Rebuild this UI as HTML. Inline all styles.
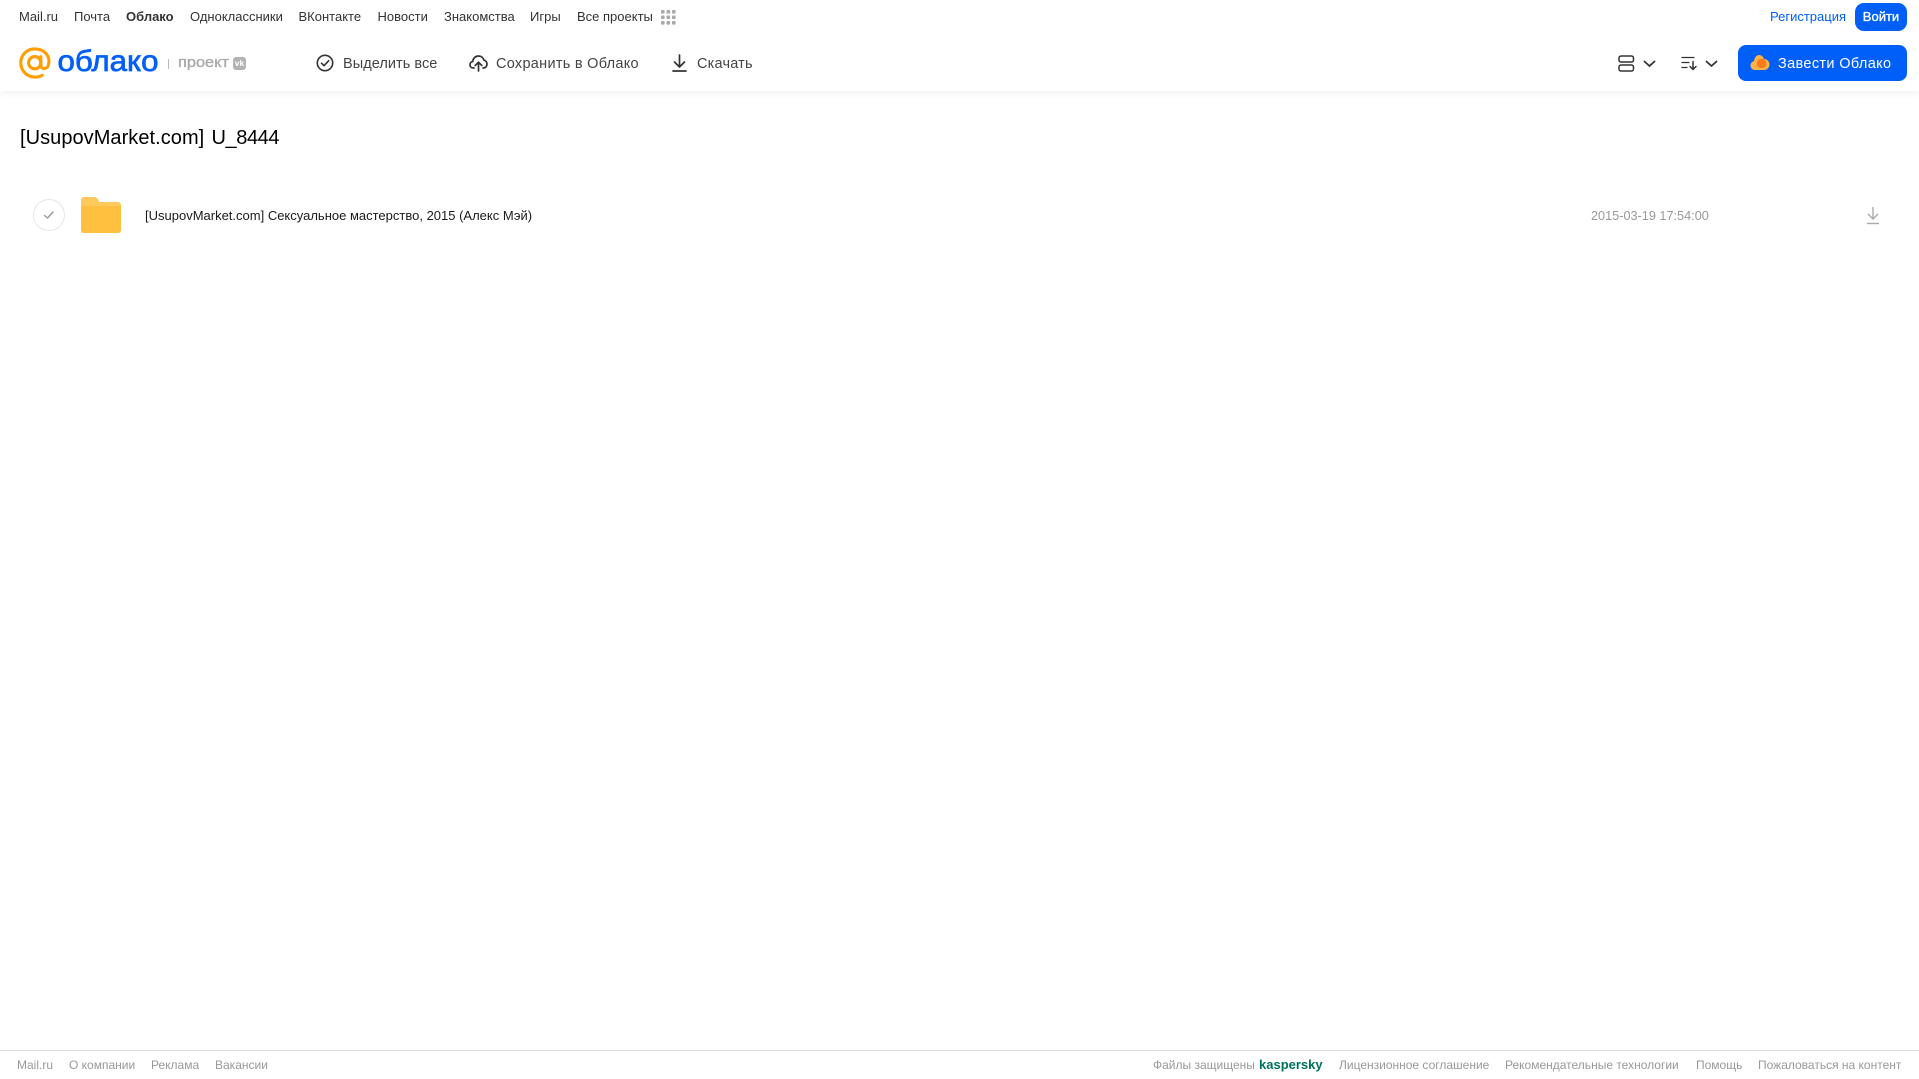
<!DOCTYPE html>
<html lang="ru"><head><meta charset="utf-8"><title>Облако</title>
<style>
html,body{margin:0;padding:0;background:#fff}
body{width:1919px;height:1079px;position:relative;overflow:hidden;font-family:"Liberation Sans",sans-serif}
.t{position:absolute;white-space:nowrap;line-height:20px}
.n{font-size:13px;color:#333;top:6.5px}
.a{font-size:14.5px;color:#444;top:53.5px}
.f{font-size:12px;color:#999;top:1055px}
svg{position:absolute;overflow:visible}
</style></head><body>
<div style="position:absolute;left:0;top:0;width:1919px;height:91px;background:#fff;box-shadow:0 1px 8px rgba(0,0,0,.08)"></div>

<a class="t n" style="left:19px">Mail.ru</a>
<a class="t n" style="left:74px">Почта</a>
<a class="t n" style="left:126px;font-weight:bold">Облако</a>
<a class="t n" style="left:190px">Одноклассники</a>
<a class="t n" style="left:298.5px">ВКонтакте</a>
<a class="t n" style="left:377.5px">Новости</a>
<a class="t n" style="left:444px">Знакомства</a>
<a class="t n" style="left:530px">Игры</a>
<a class="t n" style="left:577px">Все проекты</a>
<svg style="left:661px;top:10px" width="15" height="15"><g fill="#aaa"><rect width="3.6" height="3.6" rx=".8"/><rect x="5.5" width="3.6" height="3.6" rx=".8"/><rect x="11" width="3.6" height="3.6" rx=".8"/><rect y="5.5" width="3.6" height="3.6" rx=".8"/><rect x="5.5" y="5.5" width="3.6" height="3.6" rx=".8"/><rect x="11" y="5.5" width="3.6" height="3.6" rx=".8"/><rect y="11" width="3.6" height="3.6" rx=".8"/><rect x="5.5" y="11" width="3.6" height="3.6" rx=".8"/><rect x="11" y="11" width="3.6" height="3.6" rx=".8"/></g></svg>

<a class="t" style="left:1770px;top:6.5px;font-size:13px;color:#005ff9">Регистрация</a>
<div class="t" style="left:1855px;top:3px;width:52px;height:28px;line-height:27px;border-radius:9px;background:#005ff9;color:#fff;font-size:13px;text-align:center;-webkit-text-stroke:.35px #fff">Войти</div>

<!-- logo -->
<svg style="left:19px;top:47px" width="32" height="32" viewBox="0 0 33 33"><circle cx="16.2" cy="16.2" r="6.3" fill="none" stroke="#ff9e00" stroke-width="3.2"/><path d="M22.5 10v8.500c0 5 6.800 5 8-.5 2-8.500-4-16-14.300-16C7.800 2 1.800 8.500 1.800 16.300c0 8.500 6.700 14.700 14.700 14.700 3 0 5.300-.6 7.500-1.800" fill="none" stroke="#ff9e00" stroke-width="3.200" stroke-linecap="round"/></svg>
<svg style="left:56px;top:44px" width="108" height="36"><text x="1.500" y="27" font-family="Liberation Sans" font-size="30" fill="#005ff9" stroke="#005ff9" stroke-width=".7" textLength="101" lengthAdjust="spacingAndGlyphs">облако</text></svg>
<div style="position:absolute;left:168px;top:59px;width:1px;height:10px;background:#bbb"></div>
<svg style="left:177px;top:50px" width="56" height="24"><text x="1" y="17" font-family="Liberation Sans" font-size="15" fill="#a9a9a9" stroke="#a9a9a9" stroke-width=".35" textLength="51" lengthAdjust="spacingAndGlyphs">проект</text></svg>
<div style="position:absolute;left:233px;top:56.500px;width:13px;height:13px;border-radius:3px;background:#b3b3b3;color:#fff;font-size:8.500px;font-weight:bold;line-height:12px;text-align:center">vk</div>

<!-- toolbar -->
<svg style="left:316px;top:54px" width="18" height="18" fill="none" stroke="#333" stroke-width="1.600" stroke-linecap="round" stroke-linejoin="round"><circle cx="9" cy="9" r="7.700"/><path d="M5.500 9.200l2.500 2.500 4.700-5"/></svg>
<div class="t a" style="left:343px;letter-spacing:.05px">Выделить все</div>
<svg style="left:469px;top:54px" width="19" height="18" fill="none" stroke="#333" stroke-width="1.700" stroke-linecap="round" stroke-linejoin="round"><path d="M5 14H4.300C2.300 14 1 12.500 1 10.700 1 9 2.200 7.700 3.800 7.500 4 4.200 6.500 2 9.500 2c2.700 0 4.800 1.800 5.400 4.200 1.800.3 3.100 1.900 3.100 3.900 0 2.200-1.600 3.900-3.700 3.900H14"/><path d="M9.500 17V8.500M6.200 11.500l3.300-3.300 3.300 3.300"/></svg>
<div class="t a" style="left:496px;letter-spacing:.28px">Сохранить в Облако</div>
<svg style="left:671.500px;top:54px" width="15" height="18" fill="none" stroke="#333" stroke-width="1.700" stroke-linecap="round" stroke-linejoin="round"><path d="M7.500 1v11.500M2.500 8l5 5 5-5"/><path d="M1 17h13"/></svg>
<div class="t a" style="left:697px;letter-spacing:.2px">Скачать</div>

<svg style="left:1618px;top:55px" width="17" height="17" fill="none" stroke="#333" stroke-width="1.500"><rect x="1" y="1" width="14.500" height="6" rx="2"/><rect x="1" y="10" width="14.500" height="6" rx="2"/></svg>
<svg style="left:1643px;top:60px" width="13" height="8" fill="none" stroke="#333" stroke-width="1.800" stroke-linecap="round" stroke-linejoin="round"><path d="M1.500 1.500L6.500 6l5-4.500"/></svg>
<svg style="left:1681px;top:56px" width="17" height="15" fill="none" stroke="#333" stroke-width="1.300" stroke-linecap="round" stroke-linejoin="round"><path d="M1 1.500h12M1 6.500h7M1 11.500h5"/><path d="M12 5.500V13M9 10.500l3 3 3-3" stroke-width="1.500"/></svg>
<svg style="left:1705px;top:60px" width="13" height="8" fill="none" stroke="#333" stroke-width="1.800" stroke-linecap="round" stroke-linejoin="round"><path d="M1.500 1.500L6.500 6l5-4.500"/></svg>

<div style="position:absolute;left:1738px;top:45px;width:169px;height:36px;border-radius:8px;background:#005ff9"></div>
<svg style="left:1750px;top:54px" width="20" height="17"><path d="M5 16C2.300 16 .5 14 .5 11.500c0-2.300 1.500-4 3.500-4.300C4.500 3.500 6.500 1 9 1c2.400 0 4.300 1.600 4.900 4 3 0 5.600 2.400 5.600 5.500S17 16 14 16z" fill="#ffb347"/><circle cx="11.500" cy="9.500" r="4.800" fill="#ff7a1a"/></svg>
<div class="t" style="left:1778px;top:53.500px;font-size:14.500px;color:#fff;letter-spacing:.35px">Завести Облако</div>

<!-- content -->
<div class="t" style="left:20px;top:126px;font-size:20px;line-height:24px;color:#000"><span style="letter-spacing:.05px">[UsupovMarket.com]</span><span style="margin-left:1.600px"> </span><span style="letter-spacing:-.4px">U_8444</span></div>

<div style="position:absolute;left:33px;top:199px;width:30px;height:30px;border:1px solid #e6e6e6;border-radius:50%"></div>
<svg style="left:43px;top:210px" width="12" height="10" fill="none" stroke="#999" stroke-width="1.400" stroke-linecap="round" stroke-linejoin="round"><path d="M1.500 5.500l3 2.500 5.500-6"/></svg>
<svg style="left:81px;top:197px" width="40" height="36"><path d="M0 3a3 3 0 0 1 3-3h10c2 0 3 1 4 2.500L18.500 5H37a3 3 0 0 1 3 3v25a3 3 0 0 1-3 3H3a3 3 0 0 1-3-3z" fill="#ffc95c"/><path d="M0 9h40v24a3 3 0 0 1-3 3H3a3 3 0 0 1-3-3z" fill="#ffc040"/></svg>
<div class="t" style="left:145px;top:205.500px;font-size:13px;color:#1a1a1a">[UsupovMarket.com] Сексуальное мастерство, 2015 (Алекс Мэй)</div>
<div class="t" style="left:1591px;top:205.500px;font-size:12.700px;color:#999">2015-03-19 17:54:00</div>
<svg style="left:1866px;top:206px" width="14" height="19" fill="none" stroke="#aaa" stroke-width="1.400"><path d="M7 1v11.500M2 8l5 5 5-5"/><path d="M1 17.500h12"/></svg>

<!-- footer -->
<div style="position:absolute;left:0;top:1050px;width:1919px;height:1px;background:#ddd"></div>
<a class="t f" style="left:17px">Mail.ru</a>
<a class="t f" style="left:69px">О компании</a>
<a class="t f" style="left:151px">Реклама</a>
<a class="t f" style="left:215px">Вакансии</a>
<div class="t f" style="left:1153px">Файлы защищены</div>
<div class="t" style="left:1259px;top:1055px;font-size:13px;font-weight:bold;color:#00725b">kaspersky</div>
<a class="t f" style="left:1339px">Лицензионное соглашение</a>
<a class="t f" style="left:1505px">Рекомендательные технологии</a>
<a class="t f" style="left:1696px">Помощь</a>
<a class="t f" style="left:1758px">Пожаловаться на контент</a>
</body></html>
